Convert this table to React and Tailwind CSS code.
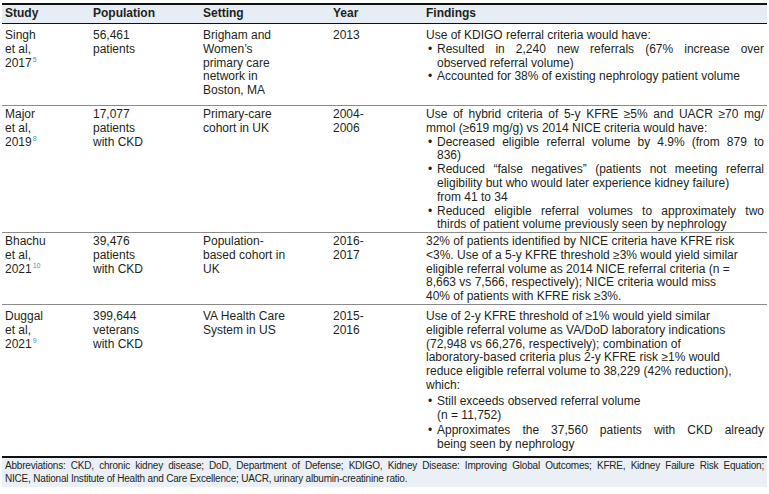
import React from 'react'

const rows = [
  {
    h: 'h-[82px] pt-[5px]',
    study: ['Singh', 'et al,', ['2017', '5']],
    pop: ['56,461', 'patients'],
    setting: ['Brigham and', 'Women\u2019s', 'primary care', 'network in', 'Boston, MA'],
    year: ['2013'],
    findings: [
      { t: 'Use of KDIGO referral criteria would have:' },
      { b: true, lines: [{ t: 'Resulted in 2,240 new referrals (67% increase over', j: true }, { t: 'observed referral volume)' }] },
      { b: true, lines: [{ t: 'Accounted for 38% of existing nephrology patient volume' }] },
    ],
  },
  {
    h: 'h-[127px] pt-[2px]',
    study: ['Major', 'et al,', ['2019', '8']],
    pop: ['17,077', 'patients', 'with CKD'],
    setting: ['Primary-care', 'cohort in UK'],
    year: ['2004-', '2006'],
    findings: [
      { t: 'Use of hybrid criteria of 5-y KFRE \u22655% and UACR \u226570 mg/', j: true },
      { t: 'mmol (\u2265619 mg/g) vs 2014 NICE criteria would have:' },
      { b: true, lines: [{ t: 'Decreased eligible referral volume by 4.9% (from 879 to', j: true }, { t: '836)' }] },
      { b: true, lines: [{ t: 'Reduced \u201cfalse negatives\u201d (patients not meeting referral', j: true }, { t: 'eligibility but who would later experience kidney failure)' }, { t: 'from 41 to 34' }] },
      { b: true, lines: [{ t: 'Reduced eligible referral volumes to approximately two', j: true }, { t: 'thirds of patient volume previously seen by nephrology' }] },
    ],
  },
  {
    h: 'h-[72px] pt-[2px]',
    study: ['Bhachu', 'et al,', ['2021', '10']],
    pop: ['39,476', 'patients', 'with CKD'],
    setting: ['Population-', 'based cohort in', 'UK'],
    year: ['2016-', '2017'],
    findings: [
      { t: '32% of patients identified by NICE criteria have KFRE risk' },
      { t: '<3%. Use of a 5-y KFRE threshold \u22653% would yield similar' },
      { t: 'eligible referral volume as 2014 NICE referral criteria (n =' },
      { t: '8,663 vs 7,566, respectively); NICE criteria would miss' },
      { t: '40% of patients with KFRE risk \u22653%.' },
    ],
  },
  {
    h: 'h-[151px] pt-[5px]',
    gap: true,
    study: ['Duggal', 'et al,', ['2021', '9']],
    pop: ['399,644', 'veterans', 'with CKD'],
    setting: ['VA Health Care', 'System in US'],
    year: ['2015-', '2016'],
    findings: [
      { t: 'Use of 2-y KFRE threshold of \u22651% would yield similar' },
      { t: 'eligible referral volume as VA/DoD laboratory indications' },
      { t: '(72,948 vs 66,276, respectively); combination of' },
      { t: 'laboratory-based criteria plus 2-y KFRE risk \u22651% would' },
      { t: 'reduce eligible referral volume to 38,229 (42% reduction),' },
      { t: 'which:' },
      { b: true, lines: [{ t: 'Still exceeds observed referral volume' }, { t: '(n = 11,752)' }] },
      { b: true, lines: [{ t: 'Approximates the 37,560 patients with CKD already', j: true }, { t: 'being seen by nephrology' }] },
    ],
  },
]

function Line({ t, j }) {
  return <div className={j ? 'whitespace-nowrap text-justify [text-align-last:justify]' : 'whitespace-nowrap'}>{t}</div>
}

function Plain({ items }) {
  return (
    <div className="pl-[3px]">
      {items.map((it, i) =>
        Array.isArray(it) ? (
          <div key={i}>
            {it[0]}
            <sup className="text-[7px] text-[#3d8fc6] ml-[1px] relative top-[-5px]">{it[1]}</sup>
          </div>
        ) : (
          <div key={i}>{it}</div>
        )
      )}
    </div>
  )
}

function Findings({ items, gap }) {
  return (
    <div className="pl-[3px] pr-[3px]">
      {items.map((it, i) =>
        it.b ? (
          <div key={i} className={gap ? 'flex mt-[2px]' : 'flex'}>
            <span className="w-[11px] shrink-0 pl-[2px]">•</span>
            <div className="flex-1">
              {it.lines.map((l, k) => <Line key={k} {...l} />)}
            </div>
          </div>
        ) : (
          <Line key={i} {...it} />
        )
      )}
    </div>
  )
}

const cols = 'grid grid-cols-[88px_110px_130px_93px_1fr]'

export default function App() {
  return (
    <div className="w-[769px] h-[494px] bg-white text-[#231f20] text-[12px] leading-[13.8px] overflow-hidden" style={{ fontFamily: '"Liberation Sans", Arial, sans-serif' }}>
      <div className="mx-[2px] pt-[3px]">
        <div className={`${cols} border-t-2 border-b border-[#111] bg-[#e6edf4] h-[21px] items-center font-bold`}>
          <div className="pl-[3px]">Study</div>
          <div className="pl-[3px]">Population</div>
          <div className="pl-[3px]">Setting</div>
          <div className="pl-[3px]">Year</div>
          <div className="pl-[3px]">Findings</div>
        </div>
        {rows.map((r, i) => (
          <div key={i} className={`${cols} ${r.h} ${i < rows.length - 1 ? 'border-b border-[#8a8a8a]' : ''}`}>
            <Plain items={r.study} />
            <Plain items={r.pop} />
            <Plain items={r.setting} />
            <Plain items={r.year} />
            <Findings items={r.findings} gap={r.gap} />
          </div>
        ))}
        <div className="border-t-2 border-[#111] bg-[#ebf0f6] h-[31px] px-[3px] pt-[1px] text-[10px] leading-[13px] tracking-[-0.2px]">
          <div className="whitespace-nowrap text-justify [text-align-last:justify]">Abbreviations: CKD, chronic kidney disease; DoD, Department of Defense; KDIGO, Kidney Disease: Improving Global Outcomes; KFRE, Kidney Failure Risk Equation;</div>
          <div className="whitespace-nowrap">NICE, National Institute of Health and Care Excellence; UACR, urinary albumin-creatinine ratio.</div>
        </div>
      </div>
    </div>
  )
}
